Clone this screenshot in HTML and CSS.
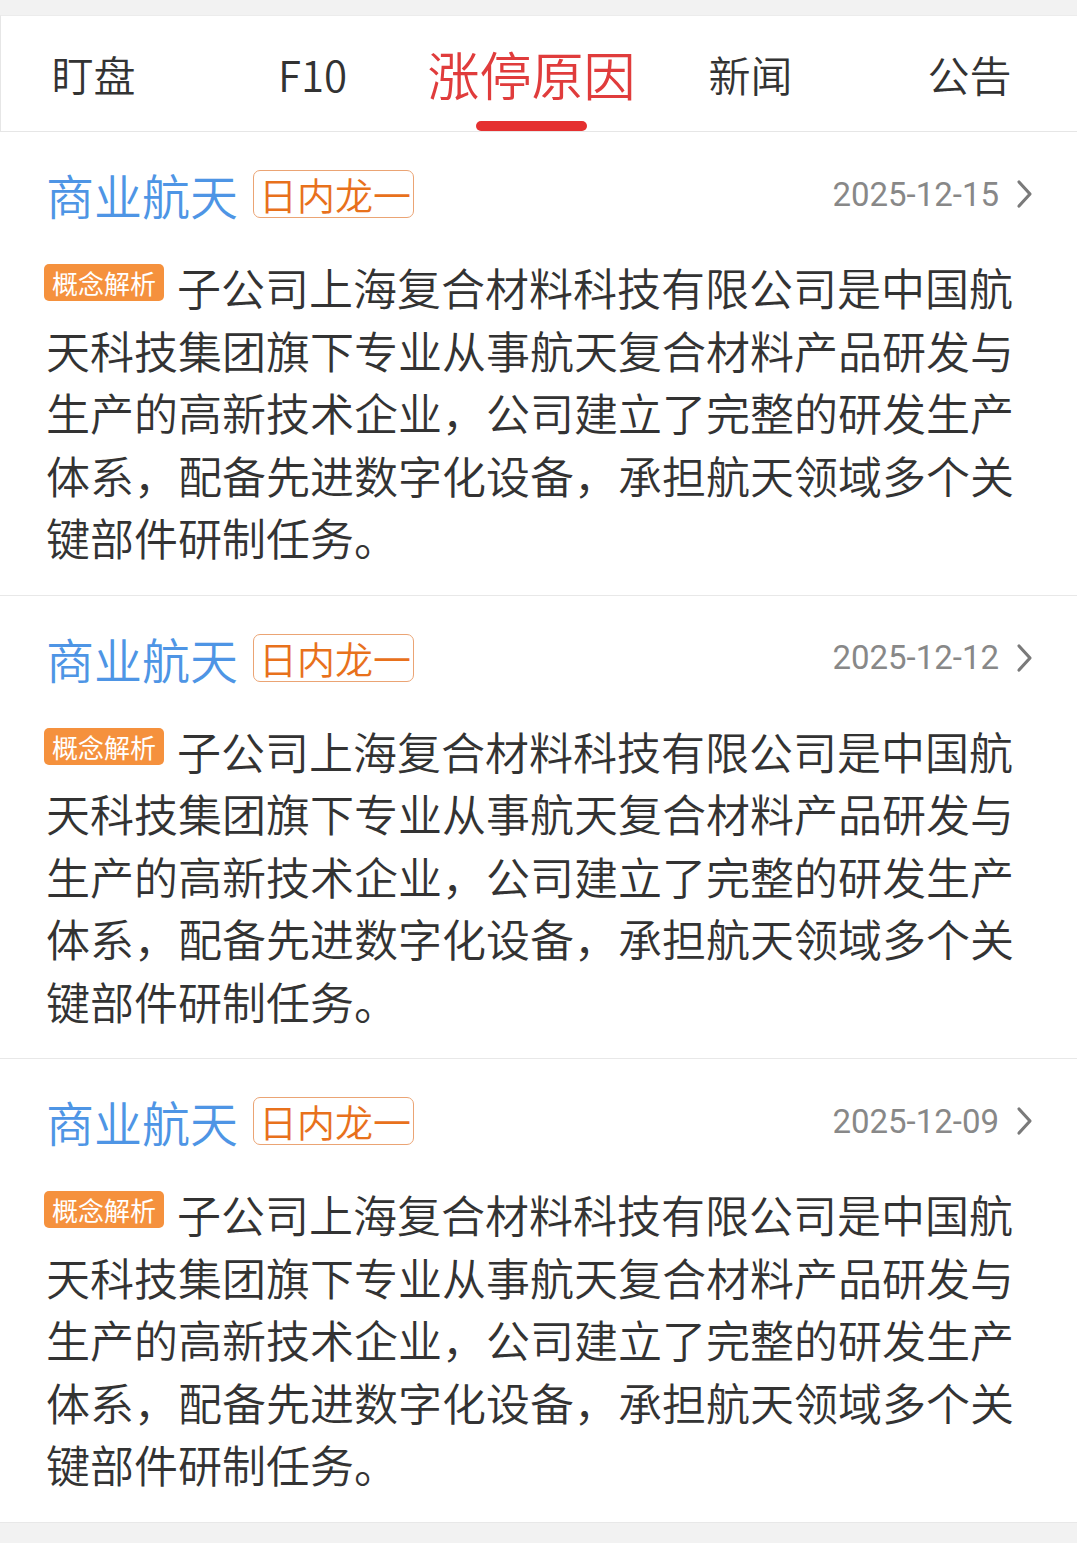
FILE: index.html
```html
<!DOCTYPE html>
<html lang="zh-CN">
<head>
    <meta charset="UTF-8">
    <meta name="viewport" content="width=device-width, initial-scale=1.0">
    <title>涨停原因</title>
    <link rel="stylesheet" href="styles.css">
</head>
<body>
    <div class="tabs">
        <div class="tab">盯盘</div>
        <div class="tab">F10</div>
        <div class="tab active">涨停原因</div>
        <div class="tab">新闻</div>
        <div class="tab">公告</div>
    </div>

    <div class="item">
        <div class="item-head">
            <span class="concept">商业航天</span>
            <span class="tag">日内龙一</span>
            <span class="date">2025-12-15</span>
            <svg class="arrow" viewBox="0 0 20 30"><polyline points="4,3 15,15 4,27" /></svg>
        </div>
        <div class="reason">
            <span class="badge">概念解析</span>
            <p>子公司上海复合材料科技有限公司是中国航天科技集团旗下专业从事航天复合材料产品研发与生产的高新技术企业，公司建立了完整的研发生产体系，配备先进数字化设备，承担航天领域多个关键部件研制任务。</p>
        </div>
    </div>

    <div class="item">
        <div class="item-head">
            <span class="concept">商业航天</span>
            <span class="tag">日内龙一</span>
            <span class="date">2025-12-12</span>
            <svg class="arrow" viewBox="0 0 20 30"><polyline points="4,3 15,15 4,27" /></svg>
        </div>
        <div class="reason">
            <span class="badge">概念解析</span>
            <p>子公司上海复合材料科技有限公司是中国航天科技集团旗下专业从事航天复合材料产品研发与生产的高新技术企业，公司建立了完整的研发生产体系，配备先进数字化设备，承担航天领域多个关键部件研制任务。</p>
        </div>
    </div>

    <div class="item">
        <div class="item-head">
            <span class="concept">商业航天</span>
            <span class="tag">日内龙一</span>
            <span class="date">2025-12-09</span>
            <svg class="arrow" viewBox="0 0 20 30"><polyline points="4,3 15,15 4,27" /></svg>
        </div>
        <div class="reason">
            <span class="badge">概念解析</span>
            <p>子公司上海复合材料科技有限公司是中国航天科技集团旗下专业从事航天复合材料产品研发与生产的高新技术企业，公司建立了完整的研发生产体系，配备先进数字化设备，承担航天领域多个关键部件研制任务。</p>
        </div>
    </div>
</body>
</html>
```

FILE: styles.css
```css
body {
    margin: 0;
    padding-top: 15px;
    background-color: #f2f2f2;
    font-family: "Noto Sans CJK SC", "Noto Sans", sans-serif;
    font-weight: 350;
    color: #333;
}
.tabs {
    display: flex;
    height: 115px;
    background-color: #fff;
    border-left: 1px solid #e6e6e6;
    border-top: 1px solid #ececec;
    border-bottom: 1px solid #e6e6e6;
    overflow: hidden;
}
.tab {
    flex: 0 0 219px;
    display: flex;
    justify-content: center;
    align-items: center;
    font-size: 42px;
    color: #333;
    position: relative;
}
.tab:first-child {
    margin-left: -17px;
}
.tab.active {
    font-size: 52px;
    color: #e03c3c;
}
/* red bar under the current tab */
.tab.active::after {
    content: "";
    position: absolute;
    bottom: 0;
    left: 54px;
    width: 111px;
    height: 10px;
    border-radius: 5px;
    background-color: #e53030;
}
.item {
    background-color: #fff;
    padding: 30px 42px 26px 46px;
    border-bottom: 1px solid #e8e8e8;
}
.item-head {
    display: flex;
    align-items: center;
    height: 64px;
}
.concept {
    font-size: 48px;
    color: #4e95e5;
}
.tag {
    margin-left: 15px;
    padding: 0 2px 0 5px;
    height: 46px;
    line-height: 46px;
    font-size: 38px;
    color: #e8711c;
    border: 1px solid #eba474;
    border-radius: 7px;
}
.date {
    margin-left: auto;
    font-family: Roboto, "Noto Sans", sans-serif;
    font-weight: 400;
    font-size: 33px;
    color: #888;
}
.arrow {
    width: 20px;
    height: 30px;
    margin-left: 16px;
}
.arrow polyline {
    fill: none;
    stroke: #7a7a7a;
    stroke-width: 3.2;
    stroke-linecap: round;
    stroke-linejoin: round;
}
.reason {
    margin-top: 30px;
    width: 985px;
}
.reason p {
    margin: 0;
    font-size: 44px;
    line-height: 62.5px;
    color: #333;
}
/* floats beside the first line only */
.badge {
    float: left;
    height: 37px;
    line-height: 37px;
    padding: 0 8px;
    margin: 8px 13px 0 -2px;
    font-size: 26px;
    font-weight: 400;
    color: #fff;
    background-color: #f5913d;
    border-radius: 5px;
}
```
